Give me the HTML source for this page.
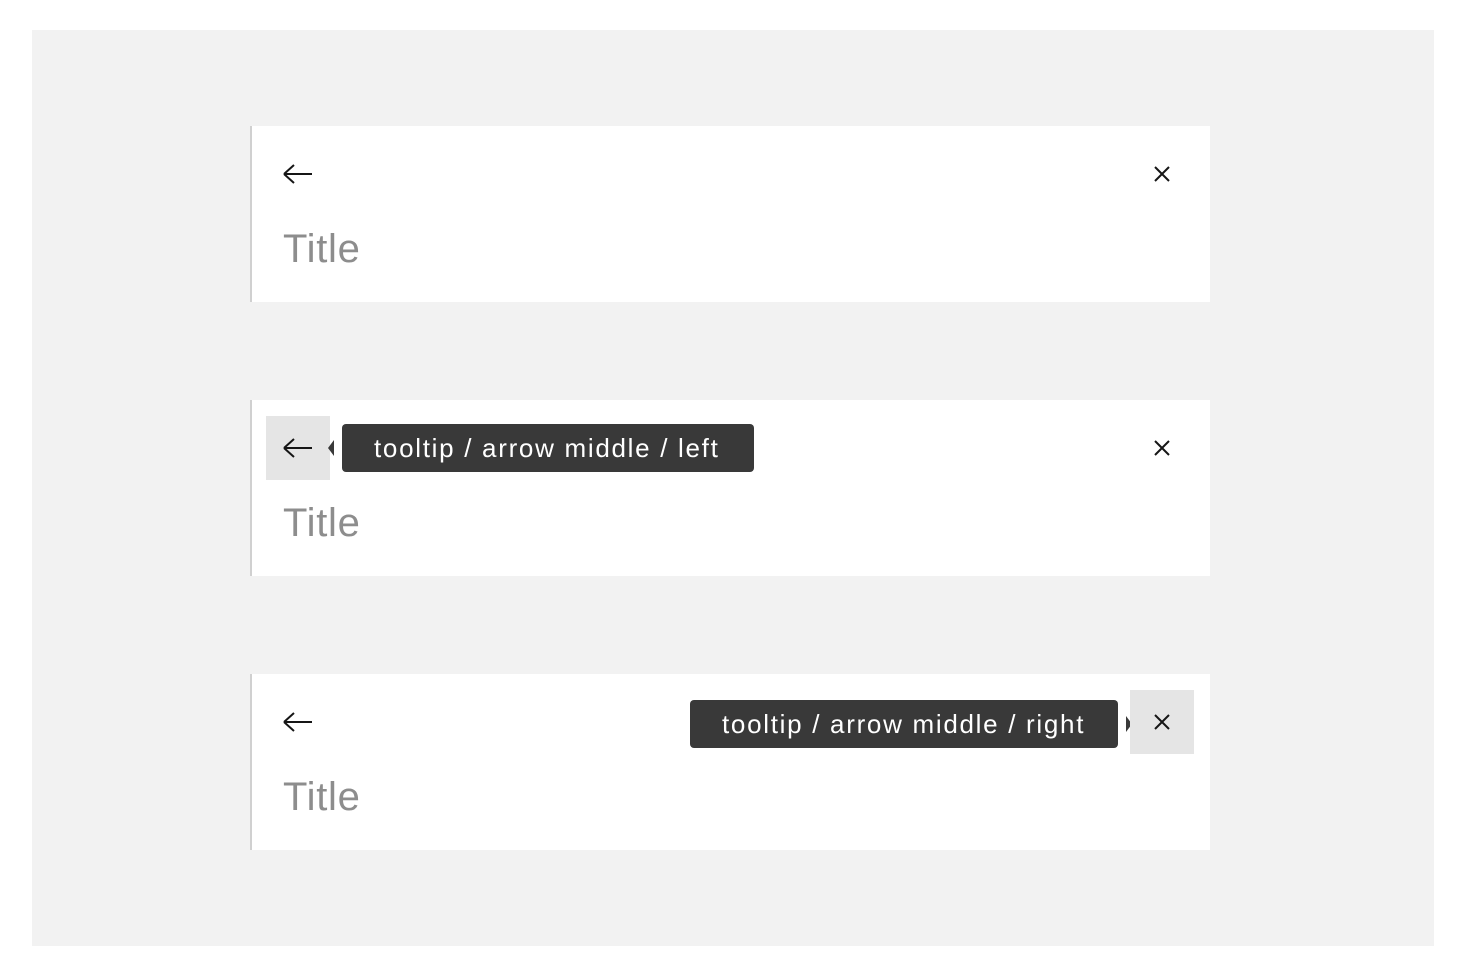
<!DOCTYPE html>
<html><head><style>
body{margin:0;width:1464px;height:980px;background:#fff;position:relative;font-family:"Liberation Sans",sans-serif;overflow:hidden}
.bg{position:absolute;left:32px;top:30px;width:1402px;height:916px;background:#f2f2f2}
.card{position:absolute;left:250px;width:960px;height:176px;background:#fff;border-left:2px solid #d0d0d0;box-sizing:border-box}
.title{position:absolute;left:31px;top:99px;font-size:40px;color:#8d8d8d;line-height:48px;letter-spacing:0.7px}
.ico{position:absolute;width:64px;height:64px}
.ico svg{position:absolute;left:16px;top:16px}
.hl{background:#e5e5e5}
.tip{position:absolute;height:48px;background:#393939;border-radius:4px;color:#fff;font-size:26px;line-height:48px;box-sizing:border-box;padding:0 32px;white-space:nowrap;letter-spacing:1.7px}
.tip:before{content:"";position:absolute;top:16px;border:8px solid transparent}
.tl:before{left:-14px;border-right:6px solid #393939;border-left:0}
.tr:before{right:-14px;border-left:6px solid #393939;border-right:0}
</style></head><body>
<div class="bg"></div>
<svg width="0" height="0" style="position:absolute"><defs>
<symbol id="a" viewBox="0 0 32 32"><path d="M2 16H30M2 16L12 7M2 16L12 25" stroke="#161616" stroke-width="2" fill="none"/></symbol>
<symbol id="x" viewBox="0 0 32 32"><path d="M9 9L23 23M23 9L9 23" stroke="#161616" stroke-width="2" fill="none"/></symbol>
</defs></svg>

<div class="card" style="top:126px">
<div class="ico" style="left:14px;top:16px"><svg width="32" height="32"><use href="#a"/></svg></div>
<div class="ico" style="left:878px;top:16px"><svg width="32" height="32"><use href="#x"/></svg></div>
<div class="title">Title</div>
</div>

<div class="card" style="top:400px">
<div class="ico hl" style="left:14px;top:16px"><svg width="32" height="32"><use href="#a"/></svg></div>
<div class="tip tl" style="left:90px;top:24px;width:412px">tooltip / arrow middle / left</div>
<div class="ico" style="left:878px;top:16px"><svg width="32" height="32"><use href="#x"/></svg></div>
<div class="title">Title</div>
</div>

<div class="card" style="top:674px">
<div class="ico" style="left:14px;top:16px"><svg width="32" height="32"><use href="#a"/></svg></div>
<div class="tip tr" style="left:438px;top:26px;width:428px">tooltip / arrow middle / right</div>
<div class="ico hl" style="left:878px;top:16px"><svg width="32" height="32"><use href="#x"/></svg></div>
<div class="title">Title</div>
</div>
</body></html>
